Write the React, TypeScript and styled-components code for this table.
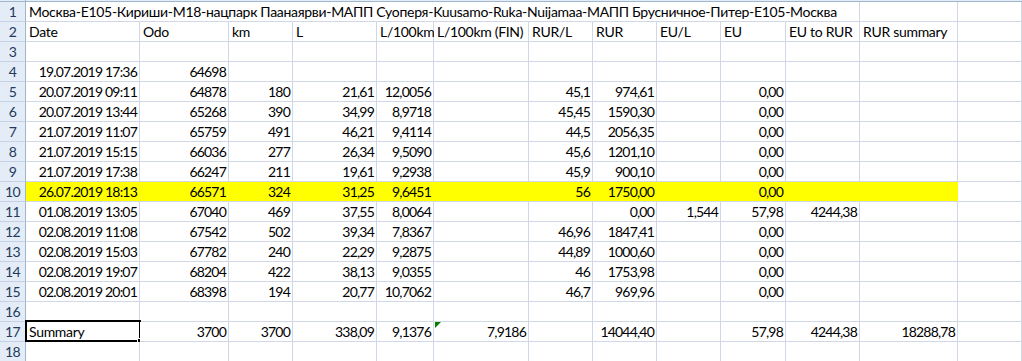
import React from 'react';
import styled, { createGlobalStyle } from 'styled-components';

const GlobalStyle = createGlobalStyle`
  html, body {
    margin: 0;
    padding: 0;
    background: #ffffff;
  }
  body {
    font-family: Lato, 'Liberation Sans', sans-serif;
    font-size: 14px;
    letter-spacing: -0.3px;
    color: #000000;
  }
`;

const COLS = [114, 89, 64, 84, 57, 95, 64, 64, 64, 65, 74, 98, 64];
const GRID = '#d0d7e5';

const Sheet = styled.div`
  width: 1022px;
  height: 361px;
  overflow: hidden;
  display: flex;
  flex-direction: column;
`;

const HeaderEdge = styled.div`
  height: 2px;
  flex: none;
  display: flex;
`;

const EdgeCorner = styled.div`
  width: 26px;
  box-sizing: border-box;
  background: #e4ecf7;
  border-right: 1px solid #9eb6ce;
  border-bottom: 1px solid #9eb6ce;
`;

const EdgeRest = styled.div`
  flex: 1;
  border-bottom: 1px solid #9eb6ce;
  background: #e4ecf7;
`;

const Grid = styled.div`
  display: grid;
  grid-template-columns: 26px ${COLS.map((c) => `${c}px`).join(' ')};
  grid-auto-rows: 20px;
`;

const RowHead = styled.div`
  box-sizing: border-box;
  background: #e4ecf7;
  border-right: 1px solid #9eb6ce;
  border-bottom: 1px solid #c5d2e3;
  color: #233a5a;
  display: flex;
  align-items: center;
  justify-content: center;
  padding-top: 1px;
  letter-spacing: -0.6px;
  line-height: 1;
`;

const Cell = styled.div<{ $num?: boolean; $fill?: boolean; $span?: number }>`
  position: relative;
  box-sizing: border-box;
  min-width: 0;
  border-right: 1px solid ${(p) => (p.$fill ? '#ffff00' : GRID)};
  border-bottom: 1px solid ${GRID};
  background: ${(p) => (p.$fill ? '#ffff00' : '#ffffff')};
  display: flex;
  align-items: center;
  justify-content: ${(p) => (p.$num ? 'flex-end' : 'flex-start')};
  padding: 1px ${(p) => (p.$num ? '2px' : '3px')} 0 3px;
  white-space: nowrap;
  line-height: 1;
  ${(p) => (p.$num ? 'letter-spacing: -0.8px;' : '')}
  ${(p) => (p.$span ? `grid-column: span ${p.$span};` : '')}
`;

const Selection = styled.div`
  position: absolute;
  left: -1px;
  top: -2px;
  right: -2px;
  bottom: -1px;
  border: 2px solid #000000;
  pointer-events: none;
`;

const FillHandle = styled.div`
  position: absolute;
  right: -5px;
  bottom: -5px;
  width: 5px;
  height: 5px;
  background: #000000;
  border: 1px solid #ffffff;
`;

const ErrorMark = styled.div`
  position: absolute;
  left: 1px;
  top: 0;
  width: 0;
  height: 0;
  border-top: 6px solid #008000;
  border-right: 6px solid transparent;
`;

const title =
  'Москва-E105-Кириши-M18-нацпарк Паанаярви-МАПП Суоперя-Kuusamo-Ruka-Nuijamaa-МАПП Брусничное-Питер-E105-Москва';

const headers = ['Date', 'Odo', 'km', 'L', 'L/100km', 'L/100km (FIN)', 'RUR/L', 'RUR', 'EU/L', 'EU', 'EU to RUR', 'RUR summary', ''];

type Row = string[];

const data: Record<number, Row> = {
  4: ['19.07.2019 17:36', '64698', '', '', '', '', '', '', '', '', '', '', ''],
  5: ['20.07.2019 09:11', '64878', '180', '21,61', '12,0056', '', '45,1', '974,61', '', '0,00', '', '', ''],
  6: ['20.07.2019 13:44', '65268', '390', '34,99', '8,9718', '', '45,45', '1590,30', '', '0,00', '', '', ''],
  7: ['21.07.2019 11:07', '65759', '491', '46,21', '9,4114', '', '44,5', '2056,35', '', '0,00', '', '', ''],
  8: ['21.07.2019 15:15', '66036', '277', '26,34', '9,5090', '', '45,6', '1201,10', '', '0,00', '', '', ''],
  9: ['21.07.2019 17:38', '66247', '211', '19,61', '9,2938', '', '45,9', '900,10', '', '0,00', '', '', ''],
  10: ['26.07.2019 18:13', '66571', '324', '31,25', '9,6451', '', '56', '1750,00', '', '0,00', '', '', ''],
  11: ['01.08.2019 13:05', '67040', '469', '37,55', '8,0064', '', '', '0,00', '1,544', '57,98', '4244,38', '', ''],
  12: ['02.08.2019 11:08', '67542', '502', '39,34', '7,8367', '', '46,96', '1847,41', '', '0,00', '', '', ''],
  13: ['02.08.2019 15:03', '67782', '240', '22,29', '9,2875', '', '44,89', '1000,60', '', '0,00', '', '', ''],
  14: ['02.08.2019 19:07', '68204', '422', '38,13', '9,0355', '', '46', '1753,98', '', '0,00', '', '', ''],
  15: ['02.08.2019 20:01', '68398', '194', '20,77', '10,7062', '', '46,7', '969,96', '', '0,00', '', '', ''],
  17: ['Summary', '3700', '3700', '338,09', '9,1376', '7,9186', '', '14044,40', '', '57,98', '4244,38', '18288,78', ''],
};

const empty: Row = COLS.map(() => '');

export default function App() {
  const rows: React.ReactNode[] = [];

  // row 1: title overflows across A..K, so those gridlines are hidden
  rows.push(<RowHead key="h1">1</RowHead>);
  rows.push(
    <Cell key="c1" $span={11}>
      {title}
    </Cell>
  );
  rows.push(<Cell key="c1l" />);
  rows.push(<Cell key="c1m" />);

  rows.push(<RowHead key="h2">2</RowHead>);
  headers.forEach((h, i) => rows.push(<Cell key={`c2-${i}`}>{h}</Cell>));

  for (let r = 3; r <= 18; r++) {
    const row = data[r] ?? empty;
    rows.push(<RowHead key={`h${r}`}>{r}</RowHead>);
    row.forEach((v, i) => {
      const isSummaryLabel = r === 17 && i === 0;
      const fill = r === 10 && i < 12;
      rows.push(
        <Cell key={`c${r}-${i}`} $num={!isSummaryLabel} $fill={fill}>
          {v}
          {isSummaryLabel && (
            <Selection>
              <FillHandle />
            </Selection>
          )}
          {r === 17 && i === 5 && <ErrorMark />}
        </Cell>
      );
    });
  }

  return (
    <>
      <GlobalStyle />
      <Sheet>
        <HeaderEdge>
          <EdgeCorner />
          <EdgeRest />
        </HeaderEdge>
        <Grid>{rows}</Grid>
      </Sheet>
    </>
  );
}
